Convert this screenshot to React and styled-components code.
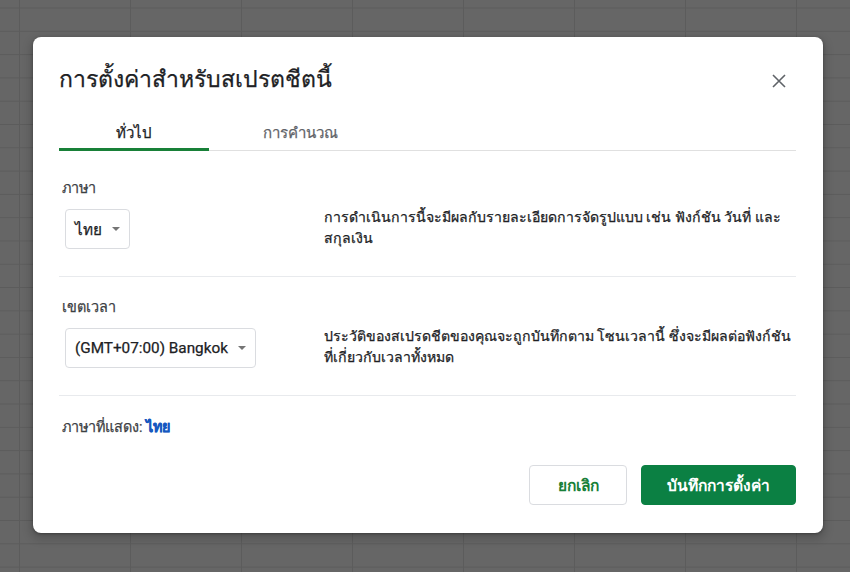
import React from 'react';
import styled, { createGlobalStyle } from 'styled-components';

const GlobalStyle = createGlobalStyle`
  html, body {
    margin: 0;
    padding: 0;
  }
  body {
    font-family: Roboto, "Noto Sans", "DejaVu Sans", sans-serif;
    color: #202124;
  }
`;

// thin Thai fallback glyphs need a touch more weight
const thaiWeight = `-webkit-text-stroke: 0.25px currentColor;`;

const Backdrop = styled.div`
  width: 850px;
  height: 572px;
  box-sizing: border-box;
  padding: 37px 27px 39px 33px;
  background-color: #666666;
  background-image:
    linear-gradient(to right, #5c5c5c 1px, transparent 1px),
    linear-gradient(to bottom, #5c5c5c 1px, transparent 1px);
  background-size: 111px 23.3px;
  background-position: 19px 7.5px;
  overflow: hidden;
`;

const Dialog = styled.div`
  width: 790px;
  height: 496px;
  box-sizing: border-box;
  background: #fff;
  border-radius: 8px;
  box-shadow: 0 4px 8px 3px rgba(0, 0, 0, 0.15), 0 1px 3px rgba(0, 0, 0, 0.3);
  padding: 27px 27px 28px 26px;
  display: flex;
  flex-direction: column;
`;

const Header = styled.div`
  display: flex;
  align-items: center;
  justify-content: space-between;
  height: 32px;
`;

const Title = styled.h1`
  margin: 0;
  font-size: 23px;
  font-weight: 400;
  line-height: 32px;
  color: #202124;
  ${thaiWeight}
`;

const CloseButton = styled.button`
  border: none;
  background: none;
  padding: 0;
  margin-right: 8px;
  margin-top: 2px;
  width: 18px;
  height: 18px;
  display: flex;
  align-items: center;
  justify-content: center;
  cursor: pointer;
`;

const Tabs = styled.div`
  display: flex;
  margin-top: 20px;
  border-bottom: 1px solid #e0e0e0;
`;

const Tab = styled.div`
  width: ${p => p.width}px;
  height: 35px;
  box-sizing: border-box;
  display: flex;
  align-items: center;
  justify-content: center;
  font-size: 15px;
  font-weight: 500;
  color: ${p => (p.active ? '#202124' : '#5f6368')};
  border-bottom: 3px solid ${p => (p.active ? '#188038' : 'transparent')};
  margin-bottom: -1px;
  padding-top: 1px;
  ${thaiWeight}
`;

const Section = styled.div`
  padding: ${p => p.top}px 0 27px 3px;
  border-bottom: 1px solid #e8eaed;
`;

const Label = styled.div`
  font-size: 14.4px;
  line-height: 20px;
  color: #3c4043;
  ${thaiWeight}
`;

const Row = styled.div`
  display: grid;
  grid-template-columns: 262px 1fr;
  margin-top: 10px;
`;

const Select = styled.div`
  justify-self: start;
  margin-left: 3px;
  height: 40px;
  box-sizing: border-box;
  border: 1px solid #dadce0;
  border-radius: 4px;
  display: flex;
  align-items: center;
  gap: 10px;
  padding: 0 9px;
  font-size: 15.3px;
  color: #202124;
  ${thaiWeight}
`;

const Caret = styled.span`
  width: 0;
  height: 0;
  border-left: 4px solid transparent;
  border-right: 4px solid transparent;
  border-top: 4px solid #757575;
`;

const Description = styled.p`
  margin: -2px 0 0;
  font-size: 14.1px;
  line-height: 21px;
  color: #202124;
  ${thaiWeight}
`;

const DisplayLang = styled.div`
  padding: 22px 0 0 3px;
  font-size: 14.4px;
  line-height: 20px;
  color: #3c4043;
  ${thaiWeight}
`;

const Link = styled.a`
  color: #1558c0;
  font-weight: 700;
  text-decoration: none;
`;

const Footer = styled.div`
  margin-top: auto;
  display: flex;
  justify-content: flex-end;
  gap: 14px;
`;

const Button = styled.button`
  height: 40px;
  width: ${p => p.width}px;
  box-sizing: border-box;
  border-radius: 4px;
  font-family: inherit;
  font-size: 15.5px;
  font-weight: 700;
  cursor: pointer;
  border: 1px solid ${p => (p.primary ? '#0b8043' : '#dadce0')};
  background: ${p => (p.primary ? '#0b8043' : '#fff')};
  color: ${p => (p.primary ? '#fff' : '#188038')};
`;

const CloseIcon = () => (
  <svg width="14" height="14" viewBox="0 0 14 14">
    <path d="M1 1L13 13M13 1L1 13" stroke="#5f6368" strokeWidth="1.6" fill="none" />
  </svg>
);

export default function App() {
  return (
    <Backdrop>
      <GlobalStyle />
      <Dialog>
        <Header>
          <Title>การตั้งค่าสำหรับสเปรตชีตนี้</Title>
          <CloseButton aria-label="ปิด">
            <CloseIcon />
          </CloseButton>
        </Header>
        <Tabs>
          <Tab width={150} active>ทั่วไป</Tab>
          <Tab width={182}>การคำนวณ</Tab>
        </Tabs>
        <Section top={28}>
          <Label>ภาษา</Label>
          <Row>
            <Select>
              ไทย <Caret />
            </Select>
            <Description>
              การดำเนินการนี้จะมีผลกับรายละเอียดการจัดรูปแบบ เช่น ฟังก์ชัน วันที่ และ
              <br />
              สกุลเงิน
            </Description>
          </Row>
        </Section>
        <Section top={21}>
          <Label>เขตเวลา</Label>
          <Row>
            <Select>
              (GMT+07:00) Bangkok <Caret />
            </Select>
            <Description>
              ประวัติของสเปรดชีตของคุณจะถูกบันทึกตาม โซนเวลานี้ ซึ่งจะมีผลต่อฟังก์ชัน
              <br />
              ที่เกี่ยวกับเวลาทั้งหมด
            </Description>
          </Row>
        </Section>
        <DisplayLang>
          ภาษาที่แสดง: <Link href="#">ไทย</Link>
        </DisplayLang>
        <Footer>
          <Button width={98}>ยกเลิก</Button>
          <Button width={155} primary>บันทึกการตั้งค่า</Button>
        </Footer>
      </Dialog>
    </Backdrop>
  );
}
